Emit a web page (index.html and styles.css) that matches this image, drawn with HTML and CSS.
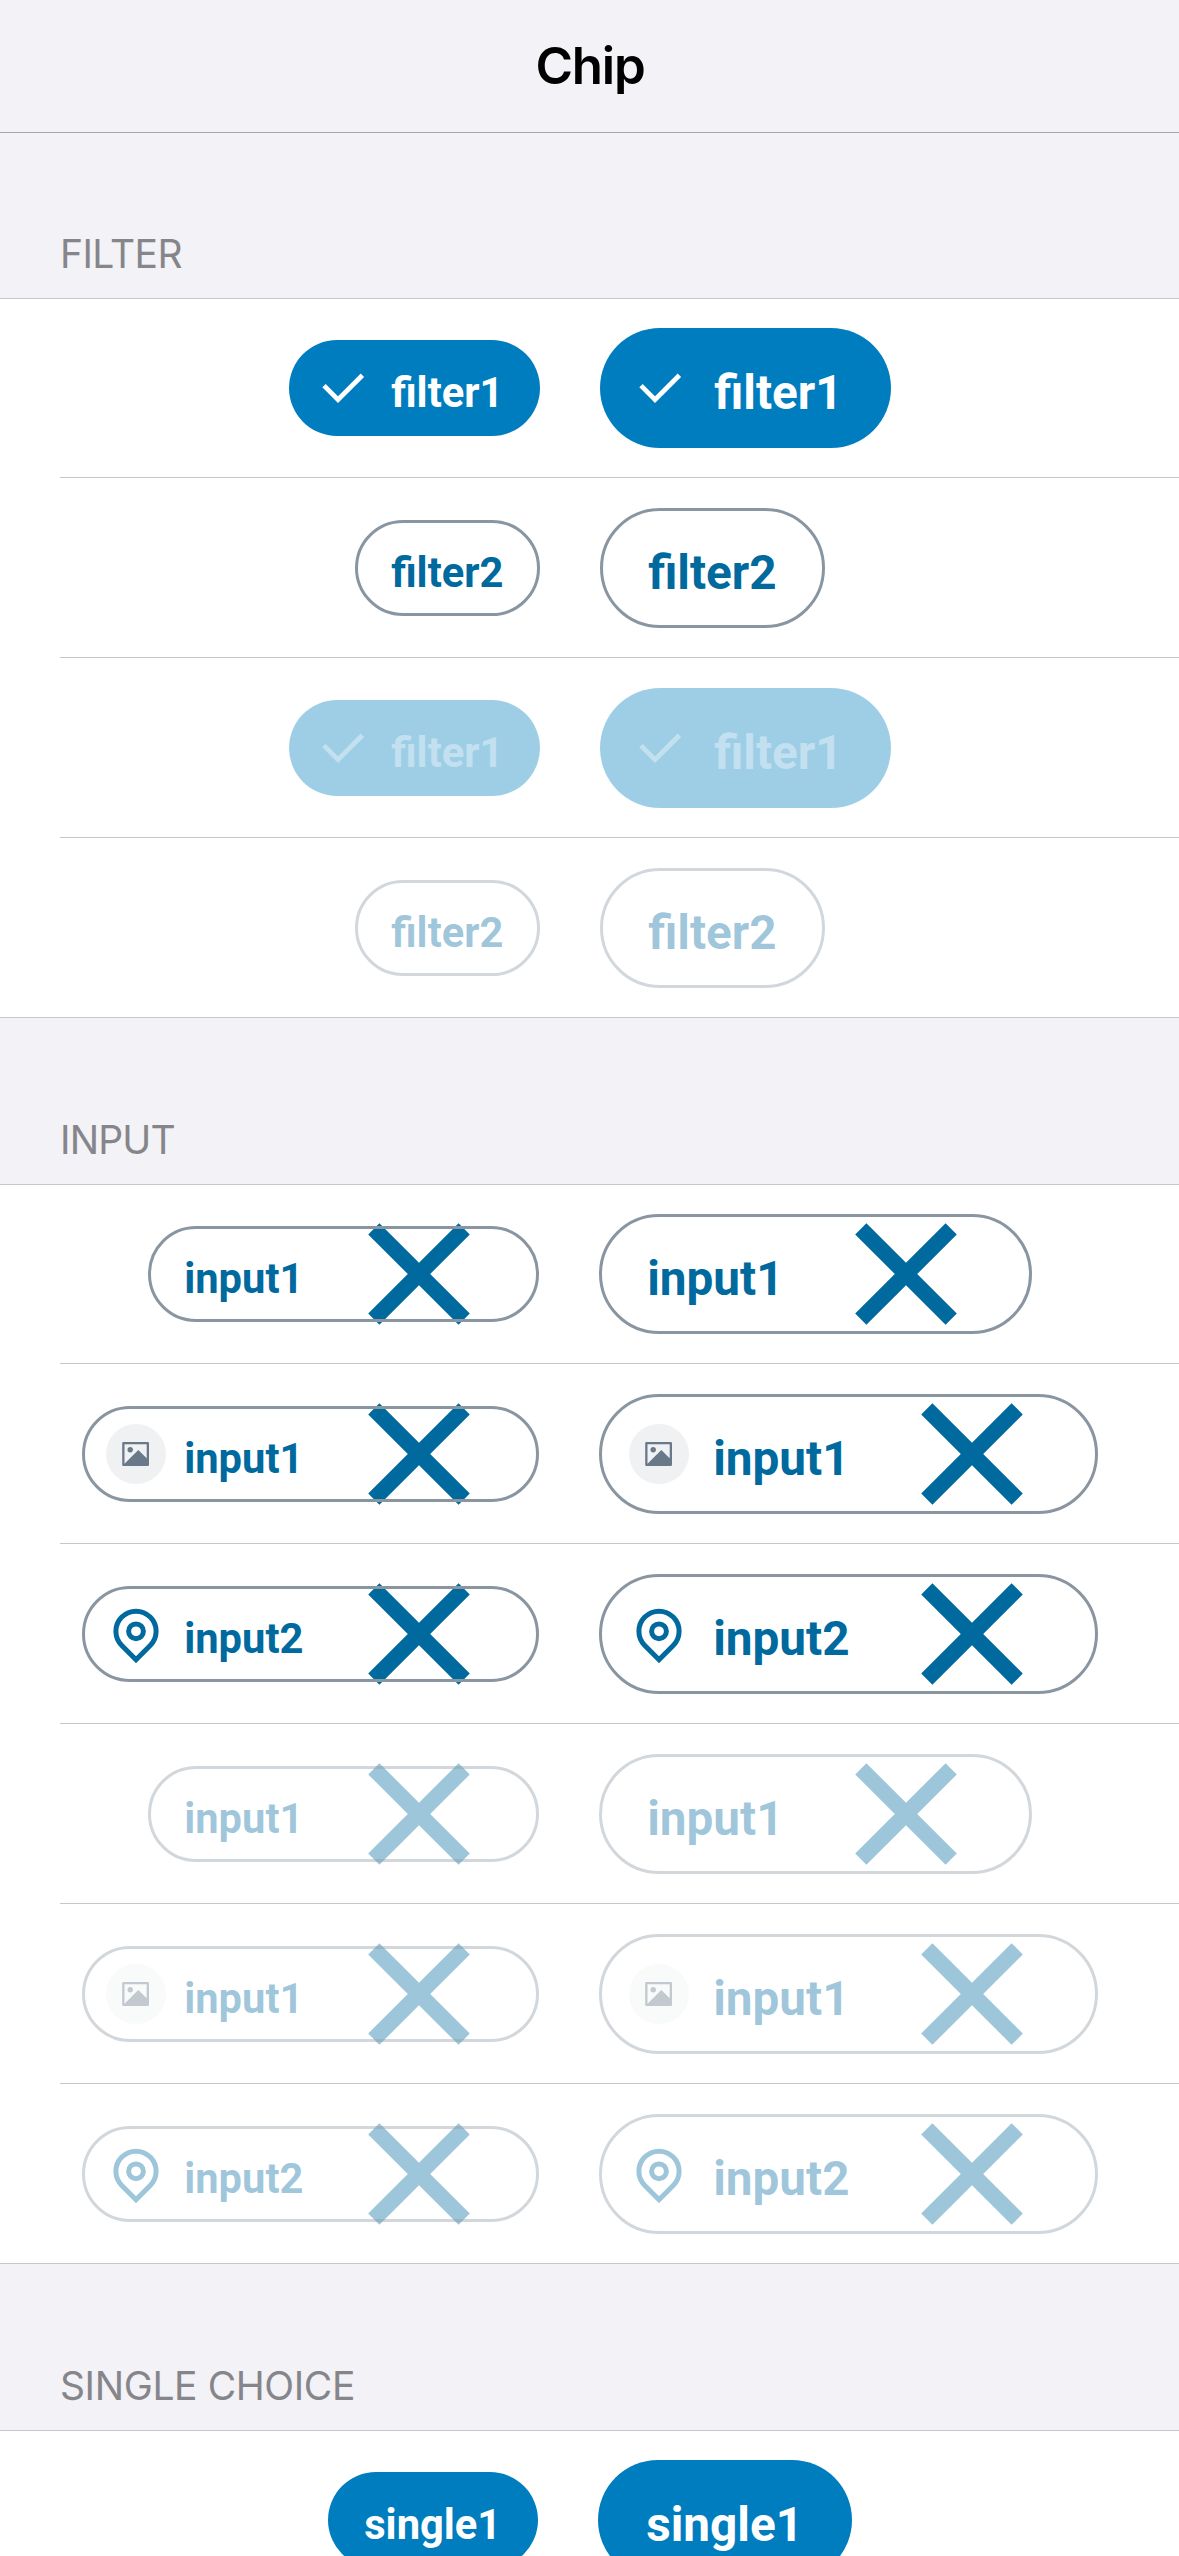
FILE: index.html
```html
<!DOCTYPE html>
<html lang="en">
<head>
<meta charset="utf-8">
<title>Chip</title>
<link rel="stylesheet" href="styles.css">
</head>
<body>
<svg class="sprite" aria-hidden="true">
  <symbol id="check" viewBox="0 0 60 60"><path d="M11 27.6 25 41.6 49.4 17.2" fill="none" stroke="currentColor" stroke-width="4.8"/></symbol>
  <symbol id="close" viewBox="0 0 102 102"><path d="M.2 11.4 11.4.2 51 39.8 90.6.2 101.8 11.4 62.2 51 101.8 90.6 90.6 101.8 51 62.2 11.4 101.8.2 90.6 39.8 51Z" fill="currentColor"/></symbol>
  <symbol id="pin" viewBox="0 0 60 60"><g fill="none" stroke="currentColor" stroke-width="5"><path d="M15.8 41.5A20.1 20.1 0 1 1 44.2 41.5L30 55.7Z"/><circle cx="30" cy="27.3" r="7.4"/></g></symbol>
  <symbol id="image" viewBox="0 0 60 60"><path fill="currentColor" fill-rule="evenodd" d="M17.5 18h24.2a1.3 1.3 0 0 1 1.3 1.3v21.4a1.3 1.3 0 0 1-1.3 1.3h-24.2a1.3 1.3 0 0 1-1.3-1.3v-21.4a1.3 1.3 0 0 1 1.3-1.3ZM18.5 20.2v19.5L32.3 26l8.4 8.2V20.2Z"/><circle cx="24.2" cy="25.8" r="2.7" fill="currentColor"/></symbol>
</svg>
<header class="navbar"><h1>Chip</h1></header>
<main>
  <section>
    <h2>FILTER</h2>
    <ul class="list">
      <li><div class="chip sm filled w-filter-icon"><svg class="icon"><use href="#check"/></svg><span>filter1</span></div><div class="chip lg filled w-filter-icon"><svg class="icon"><use href="#check"/></svg><span>filter1</span></div></li>
      <li><div class="chip sm w-filter"><span>filter2</span></div><div class="chip lg w-filter"><span>filter2</span></div></li>
      <li><div class="chip sm filled off w-filter-icon"><svg class="icon"><use href="#check"/></svg><span>filter1</span></div><div class="chip lg filled off w-filter-icon"><svg class="icon"><use href="#check"/></svg><span>filter1</span></div></li>
      <li><div class="chip sm off w-filter"><span>filter2</span></div><div class="chip lg off w-filter"><span>filter2</span></div></li>
    </ul>
  </section>
  <section>
    <h2 class="tight">INPUT</h2>
    <ul class="list">
      <li><div class="chip sm w-input"><span>input1</span><svg class="close"><use href="#close"/></svg></div><div class="chip lg w-input"><span>input1</span><svg class="close"><use href="#close"/></svg></div></li>
      <li><div class="chip sm w-input-icon"><svg class="icon avatar"><use href="#image"/></svg><span>input1</span><svg class="close"><use href="#close"/></svg></div><div class="chip lg w-input-icon"><svg class="icon avatar"><use href="#image"/></svg><span>input1</span><svg class="close"><use href="#close"/></svg></div></li>
      <li><div class="chip sm w-input-icon"><svg class="icon"><use href="#pin"/></svg><span>input2</span><svg class="close"><use href="#close"/></svg></div><div class="chip lg w-input-icon"><svg class="icon"><use href="#pin"/></svg><span>input2</span><svg class="close"><use href="#close"/></svg></div></li>
      <li><div class="chip sm off w-input"><span>input1</span><svg class="close"><use href="#close"/></svg></div><div class="chip lg off w-input"><span>input1</span><svg class="close"><use href="#close"/></svg></div></li>
      <li><div class="chip sm off w-input-icon"><svg class="icon avatar"><use href="#image"/></svg><span>input1</span><svg class="close"><use href="#close"/></svg></div><div class="chip lg off w-input-icon"><svg class="icon avatar"><use href="#image"/></svg><span>input1</span><svg class="close"><use href="#close"/></svg></div></li>
      <li><div class="chip sm off w-input-icon"><svg class="icon"><use href="#pin"/></svg><span>input2</span><svg class="close"><use href="#close"/></svg></div><div class="chip lg off w-input-icon"><svg class="icon"><use href="#pin"/></svg><span>input2</span><svg class="close"><use href="#close"/></svg></div></li>
    </ul>
  </section>
  <section>
    <h2>SINGLE CHOICE</h2>
    <ul class="list">
      <li><div class="chip sm filled w-single"><span>single1</span></div><div class="chip lg filled w-single"><span>single1</span></div></li>
    </ul>
  </section>
</main>
</body>
</html>
```
FILE: styles.css
```css
* { box-sizing: border-box; }
html, body { height: 2556px; overflow: hidden; }
body {
  margin: 0;
  background: #f2f2f7;
  font-family: Inter, "Liberation Sans", sans-serif;
}
.sprite { display: none; }
.navbar {
  height: 133px;
  border-bottom: 1px solid #a7a7ab;
  display: flex;
  align-items: center;
  justify-content: center;
}
h1 {
  margin: 0;
  padding-left: 1px;
  font-size: 51px;
  line-height: 60px;
  font-weight: 600;
  letter-spacing: -1.2px;
  color: #000;
}
h2 {
  margin: 0;
  height: 166px;
  padding: 99px 60px 0;
  font-size: 39px;
  line-height: 46px;
  font-weight: 400;
  letter-spacing: -0.4px;
  color: #85858a;
}
h2.tight { letter-spacing: -0.8px; }
section:first-child h2 { height: 165px; padding-top: 98px; letter-spacing: -0.6px; }
.list {
  list-style: none;
  margin: 0;
  padding: 0;
  background: linear-gradient(#c6c6c8, #c6c6c8) top / 100% 1px no-repeat #fff;
}
.list li {
  height: 180px;
  display: flex;
  align-items: center;
  justify-content: center;
  gap: 60px;
  background: linear-gradient(#c6c6c8, #c6c6c8) 60px 100% / 100% 1px no-repeat;
}
.list li:last-child { background-position: 0 100%; }

.chip {
  --alpha: 1;
  position: relative;
  flex: none;
  display: flex;
  align-items: center;
  color: rgb(0 105 158 / var(--alpha));
  font-family: Roboto, sans-serif;
  font-weight: 700;
  white-space: nowrap;
}
.chip.off { --alpha: .38; }
.chip::after {
  content: "";
  position: absolute;
  inset: 0;
  border: 3px solid rgb(137 150 162 / var(--alpha));
  border-radius: 60px;
}
.chip.filled {
  background: rgb(0 125 190 / var(--alpha));
  border-radius: 60px;
  color: rgb(255 255 255 / var(--alpha));
}
.chip.filled::after { display: none; }
.chip span { padding: 9px 0 0 0.7px; }
.sm { height: 96px; padding-left: 36px; font-size: 41.7px; }
.lg { height: 120px; padding-left: 48px; font-size: 47.7px; }
.icon { flex: none; width: 60px; height: 60px; }
.sm .icon { margin: 0 18px 0 -12px; }
.lg .icon { margin: 0 24px 0 -18px; }
.avatar {
  border-radius: 50%;
  background: rgb(239 241 243 / var(--alpha));
  color: rgb(106 121 138 / var(--alpha));
}
.close { flex: none; width: 102px; height: 102px; margin-left: auto; }
.sm .close { margin-right: 69px; }
.lg .close { margin-right: 75px; }

.sm.w-filter { width: 185px; }
.lg.w-filter { width: 225px; }
.sm.w-filter-icon { width: 251px; }
.lg.w-filter-icon { width: 291px; }
.sm.w-input { width: 391px; }
.lg.w-input { width: 433px; }
.sm.w-input-icon { width: 457px; }
.lg.w-input-icon { width: 499px; }
.sm.w-single { width: 210px; }
.lg.w-single { width: 254px; }
```
